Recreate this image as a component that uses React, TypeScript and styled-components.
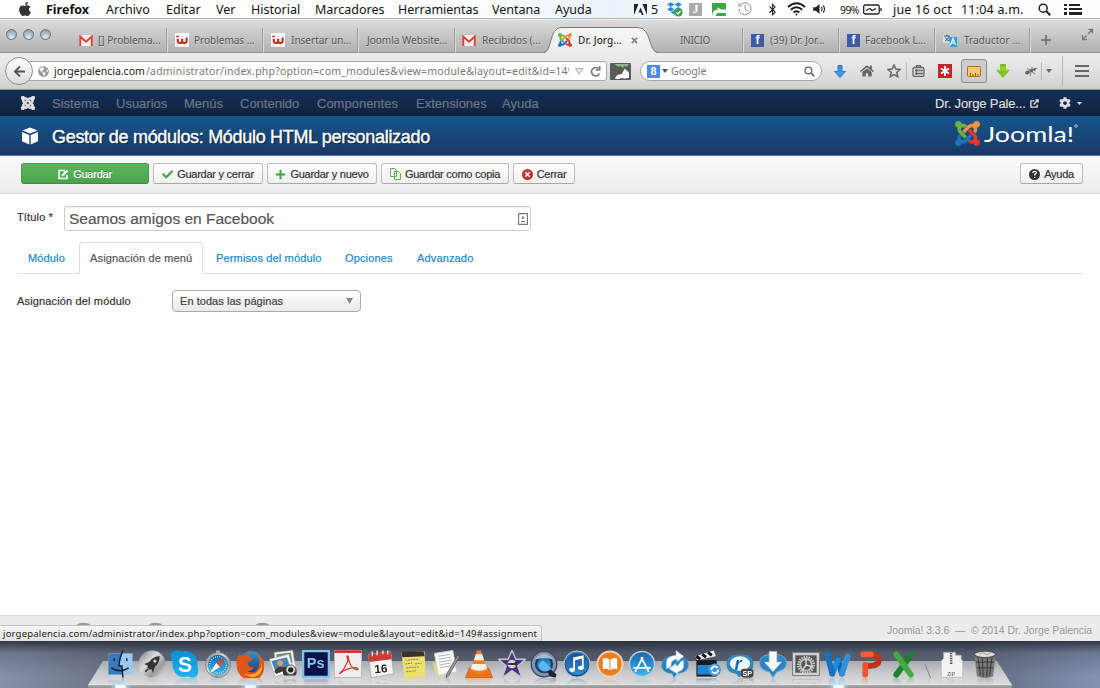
import React from "react";
import styled, { createGlobalStyle } from "styled-components";
import { FaApple, FaBluetoothB, FaDropbox, FaCheck, FaPlus, FaHome, FaCog, FaArrowLeft, FaGlobeAmericas } from "react-icons/fa";

const LUCIDA = `"Noto Sans", "Open Sans", sans-serif`;
const HELV = `"Liberation Sans", Arial, sans-serif`;

const GlobalStyle = createGlobalStyle`
  * { box-sizing: border-box; }
  html, body { margin: 0; padding: 0; }
  body { width: 1100px; height: 688px; overflow: hidden; background: #fff; }
  svg { display: block; flex: none; }
`;

const Screen = styled.div`
  width: 1100px;
  height: 688px;
  display: flex;
  flex-direction: column;
  overflow: hidden;
  font-family: ${HELV};
`;

const Slot = styled.span<{ $w: number; $ml?: number; $ls?: number; $color?: string }>`
  flex: none;
  display: flex;
  align-items: center;
  width: ${(p) => p.$w}px;
  margin-left: ${(p) => p.$ml || 0}px;
  letter-spacing: ${(p) => p.$ls || 0}px;
  color: ${(p) => p.$color || "inherit"};
  white-space: nowrap;
`;

/* ---------- system menu bar ---------- */
const MenuBar = styled.header`
  height: 19px;
  flex: none;
  display: flex;
  align-items: center;
  background: linear-gradient(90deg, #fff 0%, #fff 42%, #e9f3fa 56%, #fff 64%, #fdfdfd 100%);
  border-bottom: 1px solid #b4b4b4;
  font-family: ${LUCIDA};
  font-size: 12.5px;
  line-height: 18px;
  color: #111;
`;
const MenuItem = styled(Slot)<{ $bold?: boolean; $small?: boolean }>`
  padding-top: 1px;
  font-size: ${(p) => (p.$small ? 10.4 : 12.5)}px;
  font-weight: ${(p) => (p.$bold ? 700 : 400)};
`;

/* ---------- browser tabs ---------- */
const TabStrip = styled.div`
  height: 34px;
  flex: none;
  display: flex;
  align-items: flex-end;
  background: linear-gradient(#dedede, #c6c6c6 50%, #b0b0b0);
  font-family: ${LUCIDA};
  font-size: 10px;
  color: #555;
  box-shadow: inset 0 1px #eee;
`;
const Lights = styled.div`
  width: 73px;
  height: 34px;
  display: flex;
  gap: 6px;
  padding: 10px 0 0 6px;
  border-bottom: 1px solid #919191;
`;
const Light = styled.i`
  width: 11px;
  height: 11px;
  border-radius: 50%;
  border: 1px solid #667082;
  background: radial-gradient(circle at 50% 80%, #e9eff6 0, #b4bfd0 45%, #8491a8 100%);
`;
const Tab = styled.div<{ $w: number; $pl: number; $gap?: number; $line?: boolean }>`
  width: ${(p) => p.$w}px;
  height: 25px;
  flex: none;
  display: flex;
  align-items: center;
  gap: ${(p) => p.$gap ?? 5}px;
  padding-left: ${(p) => p.$pl}px;
  white-space: nowrap;
  text-shadow: 0 1px rgba(255, 255, 255, 0.4);
  border-right: ${(p) => (p.$line ? "1px solid #dadada" : "0")};
  box-shadow: ${(p) => (p.$line ? "inset -1px 0 #9b9b9b" : "none")};
  border-bottom: 1px solid #919191;
`;
const TabText = styled.span<{ $ls?: number }>`
  letter-spacing: ${(p) => p.$ls || 0}px;
`;
const ActiveTab = styled.div`
  position: relative;
  width: 116px;
  height: 26px;
  margin: 0 -6px 0 -13px;
  flex: none;
  z-index: 1;
`;
const ActiveTabContent = styled.div`
  position: absolute;
  inset: 0;
  display: flex;
  align-items: center;
  padding: 0 0 0 14px;
  gap: 6px;
  color: #333;
  font-weight: 500;
  white-space: nowrap;
`;
const CloseMark = styled.svg`
  margin-left: 3px;
`;
const Expand = styled.span`
  flex: 1;
  height: 34px;
  padding-top: 9px;
  border-bottom: 1px solid #919191;
`;
const Favicon = styled.span<{ $bg: string; $fg?: string; $serif?: boolean }>`
  width: 13px;
  height: 13px;
  flex: none;
  background: ${(p) => p.$bg};
  color: ${(p) => p.$fg || "#fff"};
  display: flex;
  align-items: center;
  justify-content: center;
  font: 700 12px/12px ${(p) => (p.$serif ? `"Liberation Serif", serif` : HELV)};
  text-shadow: none;
`;

/* ---------- browser toolbar ---------- */
const NavBar = styled.div`
  height: 37px;
  flex: none;
  display: flex;
  align-items: center;
  background: linear-gradient(#ededed, #dedede 60%, #cfcfcf);
  border-bottom: 1px solid #8e9096;
  font-family: ${LUCIDA};
  font-size: 10.5px;
  color: #777;
`;
const BackButton = styled.div`
  width: 28px;
  height: 28px;
  flex: none;
  margin-left: 5px;
  border-radius: 50%;
  border: 1px solid #8f8f8f;
  background: linear-gradient(#fdfdfd, #dcdcdc);
  color: #555;
  display: flex;
  align-items: center;
  justify-content: center;
  z-index: 1;
`;
const UrlBox = styled.div`
  width: 580px;
  height: 20px;
  flex: none;
  margin-left: -6px;
  padding-left: 10px;
  border: 1px solid #aaa;
  border-radius: 0 3px 3px 0;
  background: #fff;
  display: flex;
  align-items: center;
`;
const UrlPath = styled(Slot)`
  overflow: hidden;
`;
const SearchBox = styled.div`
  width: 182px;
  height: 20px;
  flex: none;
  margin-left: 9px;
  padding-left: 6px;
  border: 1px solid #a5a5a5;
  border-radius: 10px;
  background: #fff;
  display: flex;
  align-items: center;
`;
const Pressed = styled.div`
  width: 26px;
  height: 24px;
  margin-left: 9px;
  flex: none;
  border: 1px solid #8c8c8c;
  border-radius: 3px;
  background: #cdcdcd;
  display: flex;
  align-items: center;
  justify-content: center;
`;
const VLine = styled.i<{ $h: number; $ml: number }>`
  width: 1px;
  flex: none;
  height: ${(p) => p.$h}px;
  margin-left: ${(p) => p.$ml}px;
  background: #b8b8b8;
`;

/* ---------- administration page ---------- */
const AdminNav = styled.nav`
  height: 26px;
  flex: none;
  display: flex;
  align-items: center;
  background: linear-gradient(#152f58, #10223e);
  color: #6a7689;
  font-size: 13px;
  padding-left: 21px;
  -webkit-text-stroke: 0.2px;
`;
const AdminHeader = styled.div`
  height: 40px;
  flex: none;
  display: flex;
  align-items: center;
  padding-left: 21px;
  background: linear-gradient(#17568c, #1a3867);
  border-bottom: 1px solid #5570a0;
  color: #fff;
`;
const Title = styled.h1`
  width: 892px;
  margin: 3px 0 0 13px;
  font-size: 18px;
  font-weight: 400;
  line-height: 22px;
  letter-spacing: -0.31px;
  -webkit-text-stroke: 0.4px #fff;
  text-shadow: 1px 1px 1px rgba(0, 0, 0, 0.6);
  white-space: nowrap;
`;
const Brand = styled.div`
  display: flex;
  align-items: center;
  gap: 3px;
  margin: -4px 0 0 11px;
`;
const ActionBar = styled.div`
  height: 38px;
  flex: none;
  display: flex;
  align-items: flex-start;
  padding: 7px 0 0 21px;
  gap: 4px;
  background: linear-gradient(#fbfbfb, #ececec);
  border-bottom: 1px solid #d9d9d9;
`;
const Button = styled.button<{ $w: number; $primary?: boolean; $ml?: number }>`
  width: ${(p) => p.$w}px;
  height: 21px;
  flex: none;
  margin: 0 0 0 ${(p) => p.$ml || 0}px;
  padding: 1px 0 0;
  display: flex;
  align-items: center;
  justify-content: center;
  gap: 4px;
  border: 1px solid ${(p) => (p.$primary ? "#4a9a4a" : "#bcbcbc")};
  border-bottom-color: ${(p) => (p.$primary ? "#3f873f" : "#a8a8a8")};
  border-radius: 3px;
  background: ${(p) => (p.$primary ? "linear-gradient(#5cb75c, #4ca24c)" : "linear-gradient(#fff, #efefef)")};
  color: ${(p) => (p.$primary ? "#fff" : "#333")};
  text-shadow: ${(p) => (p.$primary ? "0 -1px rgba(0,0,0,.3)" : "none")};
  font: 11px/14px ${HELV};
  letter-spacing: -0.25px;
  -webkit-text-stroke: 0.2px;
  white-space: nowrap;
`;
const Page = styled.main`
  flex: 1;
  display: flex;
  flex-direction: column;
  background: #fff;
  padding: 12px 17px 0;
  color: #333;
  font-size: 11px;
  letter-spacing: 0.15px;
  -webkit-text-stroke: 0.2px;
`;
const FieldRow = styled.div`
  display: flex;
  align-items: flex-start;
`;
const Label = styled.label<{ $w: number; $top: number }>`
  width: ${(p) => p.$w}px;
  padding-top: ${(p) => p.$top}px;
  line-height: 14px;
`;
const TextField = styled.div`
  width: 467px;
  height: 25px;
  padding: 1px 2px 0 4px;
  display: flex;
  align-items: center;
  justify-content: space-between;
  border: 1px solid #ccc;
  border-radius: 3px;
  box-shadow: inset 0 1px 1px rgba(0, 0, 0, 0.07);
  font-size: 15.5px;
  letter-spacing: 0;
  color: #555;
`;
const PageTabs = styled.div`
  display: flex;
  height: 32px;
  margin-top: 11px;
  border-bottom: 1px solid #ddd;
`;
const PageTab = styled.a<{ $w: number; $pl: number; $active?: boolean }>`
  width: ${(p) => p.$w}px;
  height: 32px;
  padding: 8px 0 0 ${(p) => p.$pl}px;
  line-height: 14px;
  white-space: nowrap;
  color: ${(p) => (p.$active ? "#555" : "#1a87c9")};
  border: ${(p) => (p.$active ? "1px solid #ddd" : "1px solid transparent")};
  border-bottom: ${(p) => (p.$active ? "1px solid #fff" : "0")};
  border-radius: 4px 4px 0 0;
`;
const Select = styled.div`
  width: 189px;
  height: 22px;
  margin-top: 16px;
  padding: 0 7px 1px 7px;
  display: flex;
  align-items: center;
  justify-content: space-between;
  border: 1px solid #aaa;
  border-radius: 4px;
  background: linear-gradient(#fff 20%, #f3f3f3 50%, #e9e9e9);
  color: #444;
  letter-spacing: 0.05px;
`;
const StatusBar = styled.footer`
  position: relative;
  height: 26px;
  flex: none;
  display: flex;
  justify-content: flex-end;
  padding: 7px 8px 0 0;
  background: #ececec;
  border-top: 1px solid #dcdcdc;
  font-size: 10.5px;
  line-height: 14px;
  letter-spacing: -0.07px;
  color: #999;
  overflow: hidden;
  white-space: pre;
`;
const Pill = styled.i<{ $x: number }>`
  position: absolute;
  left: ${(p) => p.$x}px;
  top: 7px;
  width: 17px;
  height: 12px;
  border-radius: 8px;
  background: #999;
`;
const LinkPreview = styled.div`
  position: absolute;
  left: 0;
  top: 9px;
  width: 542px;
  height: 17px;
  padding: 1px 0 0 3px;
  border: 1px solid #c0c0c0;
  border-left: 0;
  border-radius: 0 3px 0 0;
  background: linear-gradient(#f6f6f6, #e2e2e2);
  color: #222;
  font: 9.5px/14px ${LUCIDA};
  letter-spacing: 0.195px;
`;

/* ---------- dock ---------- */
const Desktop = styled.div`
  position: relative;
  height: 47px;
  flex: none;
  display: flex;
  padding: 9px 0 0 103.500px;
  background: linear-gradient(rgba(35, 40, 52, 0.85), rgba(55, 62, 78, 0.3) 12px, transparent 34px),
    linear-gradient(90deg, #8590aa, #666e80 12%, #5a6070 50%, #60687a 88%, #8492b4);
  isolation: isolate;
  &::before {
    content: "";
    position: absolute;
    z-index: -1;
    left: 88px;
    top: 20px;
    width: 924px;
    height: 27px;
    clip-path: polygon(15px 0, 909px 0, 924px 24px, 924px 27px, 0 27px, 0 24px);
    background: linear-gradient(#a8aaaf, #c9cacd 45%, #dcdcde 84%, #f4f4f4 86%, #999 92%);
  }
`;
const DockItem = styled.div<{ $w?: number; $running?: boolean }>`
  position: relative;
  width: ${(p) => p.$w || 32.66}px;
  flex: none;
  display: flex;
  justify-content: center;
  align-items: flex-start;
  & > svg { -webkit-box-reflect: below -1px linear-gradient(transparent 70%, rgba(0, 0, 0, 0.3)); }
  &::after {
    content: "";
    display: ${(p) => (p.$running ? "block" : "none")};
    position: absolute;
    bottom: 0;
    left: 11px;
    width: 11px;
    height: 3px;
    border-radius: 4px;
    background: #effbff;
    box-shadow: 0 0 4px 2px #aee2fa;
  }
`;

const joomlaPieces = [
  ["#6cb33f", "M.6 92.1C.6 58.8 27.4 32 60.4 32c30 0 54.5 21.9 59.2 50.2 32.6-7.6 67.1.6 96.5 30l-44.3 44.3c-20.5-20.5-42.6-16.3-55.4-3.5-14.3 14.3-14.3 37.9 0 52.2l99.5 99.5-44 44.3c-87.7-87.2-49.7-49.7-99.8-99.7-26.8-26.5-35-64.8-24.8-98.9C20.4 144.6.6 120.7.6 92.1z"],
  ["#f7913d", "M130.1 208.5l44.3 44.3c10-10 89.7-89.7 99.7-99.8 14.3-14.3 37.6-14.3 51.9 0 12.8 12.8 17 35-3.5 55.4l44 44.3c31.2-31.2 38.5-67.6 28.9-101.2 29.2-4.1 51.9-29.2 51.9-59.5 0-33.2-26.8-60.1-59.8-60.1-30.3 0-55.4 22.5-59.5 51.6-33.8-9.9-71.7-1.5-98.3 25.1-18.3 19.1-71.1 71.5-99.6 99.9z"],
  ["#e53b2c", "M396.4 360.7c8.2-32.7-.9-68.5-26.3-93.9-11.8-12.2 5 4.7-99.5-99.7l-44.3 44.3 99.7 99.7c14.3 14.3 14.3 37.6 0 51.9-12.8 12.8-35 17-55.4-3.5l-44 44.3c27.6 30.2 68 38.8 102.7 28 5.5 27.4 29.7 48.1 58.9 48.1 33 0 59.8-26.8 59.8-60.1 0-30.2-22.5-55-51.6-59.1z"],
  ["#1b75bc", "M312.1 307.6l-44-44.3c-87 86.4-50.4 50.4-99.7 99.8-14.3 14.3-37.6 14.3-51.9 0-13.1-13.4-16.9-35.3 3.2-55.4l-44-44.3c-30.2 30.2-38 65.2-29.5 98.3-26.7 6-46.2 29.9-46.2 58.2C0 453.2 26.8 480 59.8 480c28.6 0 52.5-19.8 58.6-46.7 32.7 8.2 68.5-.6 94.2-26 32.1-32 12.2-12.4 99.5-99.7z"],
];
const JoomlaMark = ({ size, color }: { size: number; color?: string }) => (
  <svg width={size} height={size} viewBox="0 32 448 448">
    {joomlaPieces.map(([c, d]) => (
      <path key={c} d={d} fill={color || c} stroke={color} strokeWidth={color ? 26 : 0} />
    ))}
  </svg>
);

const Gmail = () => (
  <svg width="14" height="11" viewBox="0 0 14 11">
    <rect width="14" height="11" rx="1" fill="#f2efee" />
    <path d="M1.200 11V1.500L7 6.700l5.800-5.200V11" fill="none" stroke="#d5473b" strokeWidth="2" />
  </svg>
);
const WIcon = () => (
  <svg width="14" height="14" viewBox="0 0 14 14">
    <rect width="14" height="14" fill="#f8f5f4" />
    <path d="M1.300 3.500h2.400" stroke="#c5281f" strokeWidth="1.600" />
    <path d="M2.800 5.700v2.300q0 1.900 2.200 1.900T7.200 8V5.700V8q0 1.900 2.200 1.900T11.600 8V4.500" fill="none" stroke="#c5281f" strokeWidth="2" />
  </svg>
);
const Translate = () => (
  <svg width="14" height="14" viewBox="0 0 14 14">
    <path d="M0 1h7l2 9H0z" fill="#d5dde3" />
    <path d="M1 3h6M4 1.500V3M2 8q3.500-2 4-5M2.500 4.500q1 2.500 3.500 3.500" stroke="#46596a" fill="none" />
    <path d="M5 4h9v10H8z" fill="#2d9fe4" />
    <path d="M7.500 12l2.500-6.500 2.500 6.500M8.500 10h3" stroke="#fff" fill="none" strokeWidth="1.200" />
  </svg>
);
const Magnifier = ({ s = 13, c = "#222" }: { s?: number; c?: string }) => (
  <svg width={s} height={s} viewBox="0 0 13 13" fill="none" stroke={c}>
    <circle cx="5.200" cy="5.200" r="4" strokeWidth="1.500" />
    <path d="M8.200 8.200l4 4" strokeWidth="2" />
  </svg>
);
const Flag = ({ w, h, dark }: { w: number; h: number; dark?: boolean }) => (
  <svg width={w} height={h} viewBox="0 0 20 18" preserveAspectRatio="none">
    <rect width="20" height="18" rx="1" fill={dark ? "#595c5a" : "#39a845"} />
    {dark && <path d="M4 1h14l-2 3-2-1-2 2-2-2-2 1z" fill="#8fb68e" />}
    {dark ? <path d="M5 17q0-5 6-5l3-6 4 4v6q-4 1-8 0l-1 1z" fill="#fff" /> : <path d="M0 18q1-9 8-9V6l5 3h7v5H9q-3 0-4 4z" fill="#fff" />}
  </svg>
);

/* Dock artwork, drawn on a 28 by 28 grid */
const art: React.ReactNode[] = [
  <g key="finder">
    <path d="M2 3h25v22H2z" fill="#9cc8ec" /><path d="M2 3h14l-3 13h3l1 9H2z" fill="#3978bb" />
    <path d="M17 0q-4 9-4 16h3l1 12M8 8v3M21 8v3M5 18q9 6 18 0" fill="none" stroke="#10213b" strokeWidth="1.500" />
  </g>,
  <g key="launch">
    <circle cx="14" cy="14" r="14" fill="url(#silver)" />
    <path d="M22 6q-7 0-11 6l-5 2 4 2-1 2 3 2 1-1 2 4 2-6q5-4 5-11z" fill="#333" /><circle cx="17" cy="11" r="1.700" fill="#ccc" /><path d="M7 22l3-3" stroke="#444" strokeWidth="2" />
  </g>,
  <g key="skype">
    <path d="M1 1q5-2 9 0 9-2 14 4 4 6 3 12 2 5-1 10-4 2-9 0-10 2-14-5-3-6-2-11-3-6 0-10z" fill="url(#sky)" />
    <text x="14" y="22" textAnchor="middle" fontFamily={HELV} fontWeight="700" fontSize="22" fill="#fff">S</text>
  </g>,
  <g key="safari">
    <circle cx="14" cy="15" r="13" fill="url(#silver)" stroke="#888" /><path d="M12 0h4v3h-4z" fill="#aaa" /><circle cx="14" cy="15" r="10.500" fill="url(#blue)" /><circle cx="14" cy="15" r="8.500" fill="none" stroke="#d9eefc" strokeWidth="1.500" strokeDasharray=".7 1.600" />
    <path d="M22 7l-6 10-4-4z" fill="#e64832" /><path d="M6 23l6-10 4 4z" fill="#fff" />
  </g>,
  <g key="firefox">
    <circle cx="15" cy="13" r="12.500" fill="url(#deep)" />
    <path d="M3 4q3 2 6 1 3-3 7-3-4 2-3 5 5 1 2 4-5 1-3 4 3 4 7 1-3 6-8 5 8 5 12-4 2-8-2-13 8 4 8 12-1 15-15 15Q0 28 0 14 0 8 3 4z" fill="#e0551c" /><path d="M24 5q5 10-1 16-7 7-16 2 9 8 17 1 5-7 0-19z" fill="#f9b52a" />
  </g>,
  <g key="photos">
    <path d="M5 2L24 0l3 18-20 3z" fill="#f8f5e8" stroke="#bbb" strokeWidth=".5" /><path d="M7 4l15-2 2 11-15 3z" fill="#6a8b79" /><path d="M0 9l20-5 5 17-19 6z" fill="#f7f7f7" stroke="#aaa" strokeWidth=".5" /><path d="M2 11l16-4 4 12-15 5z" fill="#4d82b4" /><circle cx="11" cy="13" r="3" fill="#d69c72" /><path d="M5 22q3-6 8-5l7 2-13 5z" fill="#473a36" /><rect x="14" y="17" width="14" height="9" rx="3" fill="#333" /><circle cx="22" cy="20" r="5" fill="#d9d9d9" stroke="#555" /><circle cx="22" cy="20" r="2.700" fill="#222" />
  </g>,
  <g key="ps">
    <path d="M.700.700h26.600v26.600H.700z" fill="#0c1048" stroke="#82c1eb" strokeWidth="2.400" /><text x="13.700" y="18" textAnchor="middle" fontFamily={HELV} fontSize="15" fontWeight="700" fill="#83c8f2">Ps</text>
  </g>,
  <g key="pdf">
    <path d="M0 0h28v28H0z" fill="#efefef" stroke="#bbb" /><path d="M0 0h28v2.500H0z" fill="#d7241b" /><path d="M5 24q6-5 9-14-2-6 0-4 2 13 9 14 3 0 0-2-8-1-18 6z" fill="none" stroke="#d83125" strokeWidth="1.300" />
  </g>,
  <g key="calendar">
    <path d="M1 4l23-3 3 23-23 4z" fill="#f7f7f7" stroke="#999" strokeWidth=".6" /><path d="M1 4l23-3 1 8L2 12z" fill="#cd3b35" /><path d="M5 1v5M10 0v5M16 0v4M21 0v4" stroke="#ddd" strokeWidth="1.500" /><text x="14" y="23" textAnchor="middle" fontFamily={HELV} fontWeight="700" fontSize="12" fill="#222" transform="rotate(-5 14 20)">16</text>
  </g>,
  <g key="notes">
    <path d="M1 2l24-1 1 26-22 1z" fill="#eee06f" /><path d="M1 1h23l1 5-23 1z" fill="#39332d" /><path d="M5 10l14-1M5 14l7-1M15 14l7-1M6 18l13-1M6 22l10-1" stroke="#88823f" strokeDasharray="2 .8" />
  </g>,
  <g key="textedit">
    <path d="M0 12l4 15 18-4z" fill="#e8d777" /><path d="M2 3l19-3 4 22-19 4z" fill="#fafafa" stroke="#ccc" /><path d="M6 6l12-2M6 9l13-2M7 12l13-2M7 15l12-2M8 18l10-2" stroke="#aaa" strokeWidth=".9" /><path d="M28 6L17 26l-3 2 1-4L26 5z" fill="#999" stroke="#444" strokeWidth=".7" />
  </g>,
  <g key="vlc">
    <path d="M4 18h20l4 10H0z" fill="#ed7419" stroke="#b94e0c" strokeWidth=".6" /><path d="M12 0h4l7 21q-9 5-18 0z" fill="#f58021" /><path d="M10.700 4h6.600l2 6h-10.600zM7.400 14h13.200l1.800 5q-8 4-17 0z" fill="#f5f1eb" />
  </g>,
  <g key="imovie">
    <path d="M14 0l4 9h10l-8 7 4 12-10-7-10 7 4-12-8-7h10z" fill="#46347e" stroke="#c7c3ce" strokeWidth="1.500" /><circle cx="14" cy="14" r="4.500" fill="#d7d7db" /><path d="M10 13h6l3-2v5l-3-1h-6z" fill="#333" />
  </g>,
  <g key="quicktime">
    <circle cx="14" cy="14" r="14" fill="#3a4d68" /><circle cx="14" cy="14" r="11" fill="#1d3d6b" stroke="#8795a8" strokeWidth="3" /><circle cx="14" cy="14" r="7" fill="url(#blue)" /><path d="M13 13l14 12-1 3-6-1z" fill="#162536" /><path d="M9 18q-1-6 4-8l9 9q-8 6-13-1z" fill="#5cb6f2" /><path d="M5 9q9-10 18 0-8-2-18 0z" fill="#d5efff" opacity=".7" />
  </g>,
  <g key="itunes">
    <circle cx="14" cy="14" r="13.500" fill="url(#deep)" stroke="#b7c5d0" /><circle cx="14" cy="14" r="11.500" fill="url(#itblue)" /><path d="M11 20V8l9-2v12M11 9.500l9-2" fill="none" stroke="#fff" strokeWidth="1.800" /><ellipse cx="9" cy="20" rx="3" ry="2.200" fill="#fff" /><ellipse cx="18" cy="18" rx="3" ry="2.200" fill="#fff" />
  </g>,
  <g key="books">
    <circle cx="14" cy="14" r="13" fill="#ef7e1b" stroke="#e8d2bc" strokeWidth="2" /><path d="M14 9q-4-3-8-1v12q4-2 8 1 4-3 8-1V8q-4-2-8 1v11" fill="#fff" stroke="#e77b20" />
  </g>,
  <g key="appstore">
    <circle cx="14" cy="14" r="13" fill="url(#blue)" stroke="#bdcbd5" strokeWidth="1.500" /><path d="M7 22l8-15M13 7l8 15M5 18h18" stroke="#fff" strokeWidth="1.800" />
  </g>,
  <g key="sync">
    <path d="M0 15Q1 6 13 6q15 0 15 9 0 8-12 9l-3 4-2-4Q0 23 0 15z" fill="#2580bd" stroke="#6aa7cf" strokeWidth=".6" />
    <path d="M5 19V12q0-6 10-7V0l8 6-7 6V9q-6 1-6 5v3zM23 10v7q-1 4-6 5v3l-9-6 7-6v3q4-1 4-4z" fill="#fff" stroke="#8ab4d0" strokeWidth=".6" />
  </g>,
  <g key="clapper">
    <path d="M1 6L20 0l2 6L3 10z" fill="#eee" /><path d="M2 6l4 3M8 4l4 3M14 2l4 3" stroke="#111" strokeWidth="3" /><path d="M2 10h21v17H2z" fill="#151b24" /><path d="M3 15h18v10H3z" fill="#2583cf" /><circle cx="21" cy="20" r="6.500" fill="#4a9bd8" /><path d="M17 20q3-6 7-2M25 20q-3 6-7 2" fill="none" stroke="#fff" strokeWidth="1.800" />
  </g>,
  <g key="rsp">
    <path d="M0 14Q0 4 14 4t14 10q0 9-11 10l-4 4-3-4Q0 23 0 14z" fill="#3186bb" /><ellipse cx="14" cy="13.500" rx="10.500" ry="7.500" fill="#eef5fa" /><text x="12" y="20" textAnchor="middle" fontFamily={HELV} fontWeight="700" fontStyle="italic" fontSize="19" fill="#176fb2">r</text><rect x="15" y="19" width="13" height="9" rx="3" fill="#444" /><text x="21.500" y="26" textAnchor="middle" fontFamily={HELV} fontWeight="700" fontSize="7.500" fill="#fff">SP</text>
  </g>,
  <g key="download">
    <path d="M0 13q0-9 14-9t14 9q0 7-10 9l-4 6-4-6Q0 20 0 13z" fill="#2d84c5" stroke="#75abd1" /><path d="M10 1h8v11h5l-9 10-9-10h5z" fill="#f7f9fa" stroke="#a9bac6" strokeWidth=".6" />
  </g>,
  <g key="settings">
    <path d="M0 2h28v24H0z" fill="#d1d3d3" stroke="#777" /><path d="M3 5h22v18H3z" fill="#555" /><circle cx="14" cy="15" r="8" fill="none" stroke="#ccc" strokeWidth="2.500" strokeDasharray="1.500 1" /><circle cx="14" cy="15" r="6" fill="none" stroke="#bbb" strokeWidth="2" /><path d="M14 15l-4 6M14 15l7 2M14 15V8" stroke="#ddd" strokeWidth="1.500" />
  </g>,
  <g key="word" fill="none" strokeWidth="6" strokeLinecap="round" strokeLinejoin="round">
    <path d="M14 9l4 15" stroke="#1163af" /><path d="M8 24l6-14" stroke="#1d87dc" /><path d="M3 4l5 20" stroke="#1472c1" /><path d="M18 24l6-18" stroke="#2f91dd" />
  </g>,
  <g key="powerpoint" fill="none" strokeWidth="6" strokeLinecap="round" strokeLinejoin="round">
    <path d="M6 4h8q8 1 8 6t-8 6H9" stroke="#bd3418" /><path d="M6 4h8" stroke="#f05f32" /><path d="M8 15v10" stroke="#f0562d" />
  </g>,
  <g key="excel" strokeWidth="6" strokeLinecap="round">
    <path d="M22 4L6 25" stroke="#207e33" /><path d="M6 4l15 21" stroke="#45aa43" />
  </g>,
];

const DockIcon = ({ children, w = 28 }: { children: React.ReactNode; w?: number }) => (
  <svg width={w} height="28" viewBox="-.5 -.5 29 29" preserveAspectRatio="none">{children}</svg>
);
const DockDefs = () => (
  <svg width="0" height="0">
    <defs>
      <linearGradient id="silver" x2="1" y2="1"><stop stopColor="#777" /><stop offset=".4" stopColor="#ddd" /><stop offset=".7" stopColor="#999" /><stop offset="1" stopColor="#eee" /></linearGradient>
      <linearGradient id="sky" x2="0" y2="1"><stop stopColor="#078ed5" /><stop offset="1" stopColor="#21b4ed" /></linearGradient>
      <linearGradient id="blue" x2="0" y2="1"><stop stopColor="#1866a5" /><stop offset="1" stopColor="#38b9f2" /></linearGradient>
      <linearGradient id="itblue" x2="0" y2="1"><stop stopColor="#1b4f8c" /><stop offset="1" stopColor="#2f8fd8" /></linearGradient>
      <linearGradient id="deep" x2="0" y2="1"><stop stopColor="#3c8fc3" /><stop offset="1" stopColor="#103a78" /></linearGradient>
    </defs>
  </svg>
);

const ExternalIcon = ({ s = 9, c = "#ddd" }: { s?: number; c?: string }) => (
  <svg width={s} height={s} viewBox="0 0 10 10" fill="none" stroke={c} strokeWidth="1.500">
    <path d="M5 2H1v7h7V6M4 6l5-5M6 1h3v3" />
  </svg>
);
const EditIcon = () => (
  <svg width="11" height="11" viewBox="0 0 11 11" fill="none" stroke="#fff" strokeWidth="1.500">
    <path d="M7 1.500H1v8h8V6" /><path d="M4 7l5.500-5.500" strokeWidth="2.400" />
  </svg>
);

const menus: [string, number][] = [["Archivo", 44], ["Editar", 34], ["Ver", 19], ["Historial", 48], ["Marcadores", 67], ["Herramientas", 78], ["Ventana", 47], ["Ayuda", 36]];
const adminMenus: [string, number][] = [["Sistema", 47], ["Usuarios", 51], ["Menús", 39], ["Contenido", 60], ["Componentes", 82], ["Extensiones", 69], ["Ayuda", 37]];

export default function App() {
  return (
    <Screen>
      <GlobalStyle />
      <MenuBar>
        <Slot $w={14} $ml={17}><FaApple size={16} color="#333" /></Slot>
        <MenuItem $w={44} $ml={15} $bold>Firefox</MenuItem>
        {menus.map(([t, w]) => <MenuItem key={t} $w={w} $ml={16}>{t}</MenuItem>)}
        <Slot $w={13} $ml={43}>
          <svg width="13" height="11" viewBox="0 0 13 11"><path d="M0 0h4.500L0 11zM8.500 0H13v11zM6.500 3.500l3.200 7.500H7.900l-1-2.400H4.600z" fill="#222" /></svg>
        </Slot>
        <MenuItem $w={7} $ml={4}>5</MenuItem>
        <Slot $w={16} $ml={9}>
          <svg width="16" height="16" viewBox="0 0 16 16"><FaDropbox size={15} color="#2e8fd6" /><circle cx="11.500" cy="11.500" r="4" fill="#43a047" /><path d="M9.500 11.500l1.500 1.500 2.500-3" fill="none" stroke="#fff" strokeWidth="1.200" /></svg>
        </Slot>
        <Slot $w={14} $ml={6}><Favicon $bg="#a9a9a9" $serif>J</Favicon></Slot>
        <Slot $w={15} $ml={9}><Flag w={14} h={13} /></Slot>
        <Slot $w={14} $ml={11}>
          <svg width="14" height="14" viewBox="0 0 14 14" fill="none" stroke="#929292"><path d="M2 3.500A6 6 0 1 1 1 7M1 1v3h3M7 3v4l3 2" /></svg>
        </Slot>
        <Slot $w={9} $ml={14}><FaBluetoothB size={13} color="#222" /></Slot>
        <Slot $w={18} $ml={12}>
          <svg width="19" height="14" viewBox="0 0 19 14" fill="none" stroke="#1b1b1b" strokeWidth="1.900"><path d="M1 5q8.500-7.500 17 0M3.800 7.800q5.700-5 11.400 0M6.600 10.500q2.900-2.500 5.800 0" /><circle cx="9.500" cy="12.500" r="1" fill="#222" stroke="none" /></svg>
        </Slot>
        <Slot $w={14} $ml={8}>
          <svg width="13" height="10" viewBox="0 0 14 11"><path d="M0 3.500h3L7 0v11L3 7.500H0z" fill="#222" /><path d="M9 3q1.500 2.500 0 5M11 1.500q3 4 0 8" fill="none" stroke="#222" strokeWidth="1.200" /></svg>
        </Slot>
        <MenuItem $w={20} $ml={13} $ls={-0.55} $small>99%</MenuItem>
        <Slot $w={19} $ml={3}>
          <svg width="19" height="11" viewBox="0 0 19 11" fill="none" stroke="#222" strokeWidth="1.300"><rect x=".7" y="1" width="15.500" height="9" rx="1.500" /><path d="M18 4v3M3 6.500l4-2 2 2 4-2" /></svg>
        </Slot>
        <MenuItem $w={60} $ml={11} $ls={0.2}>jue 16 oct</MenuItem>
        <MenuItem $w={63} $ml={8} $ls={0.2}>11:04 a.m.</MenuItem>
        <Slot $w={13} $ml={14}><Magnifier /></Slot>
        <Slot $w={18} $ml={13}>
          <svg width="18" height="11" viewBox="0 0 18 11"><path d="M0 0h3v2H0zM5 0h11v2H5zM0 4h3v2H0zM5 4h13v2H5zM0 8h3v3H0zM5 8h13v3H5z" fill="#222" /></svg>
        </Slot>
      </MenuBar>

      <TabStrip>
        <Lights><Light /><Light /><Light /></Lights>
        <Tab $w={95} $pl={6} $line><Gmail /><TabText>[] Problema...</TabText></Tab>
        <Tab $w={96} $pl={7} $line><WIcon /><TabText>Problemas ...</TabText></Tab>
        <Tab $w={95} $pl={7} $gap={6} $line><WIcon /><TabText>Insertar un...</TabText></Tab>
        <Tab $w={97} $pl={8} $line><TabText>Joomla Website...</TabText></Tab>
        <Tab $w={101} $pl={6} $gap={6}><Gmail /><TabText>Recibidos (...</TabText></Tab>
        <ActiveTab>
          <svg width="116" height="26" viewBox="0 0 116 26">
            <defs><linearGradient id="tab" x2="0" y2="1"><stop stopColor="#f6f6f6" /><stop offset="1" stopColor="#ededed" /></linearGradient></defs>
            <path d="M0 26C8 25 5 1 17 .500H94C108 1 104 25 114 26z" fill="url(#tab)" />
            <path d="M0 25.500C8 25 5 1 17 .500H94C108 1 104 25 114 25.500" fill="none" stroke="#777" />
          </svg>
          <ActiveTabContent>
            <JoomlaMark size={14} /><TabText $ls={0.1}>Dr. Jorg...</TabText>
            <CloseMark width="7" height="7" viewBox="0 0 8 8"><path d="M1 1l6 6M7 1L1 7" stroke="#888" strokeWidth="2" /></CloseMark>
          </ActiveTabContent>
        </ActiveTab>
        <Tab $w={90} $pl={26} $line><TabText $ls={-0.3}>INICIO</TabText></Tab>
        <Tab $w={96} $pl={7} $gap={6} $line><Favicon $bg="#3f5d9b">f</Favicon><TabText>(39) Dr. Jor...</TabText></Tab>
        <Tab $w={96} $pl={7} $line><Favicon $bg="#3f5d9b">f</Favicon><TabText>Facebook L...</TabText></Tab>
        <Tab $w={95} $pl={7} $gap={7} $line><Translate /><TabText>Traductor ...</TabText></Tab>
        <Tab $w={50} $pl={10}><svg width="10" height="10" viewBox="0 0 10 10"><path d="M0 5h10M5 0v10" stroke="#666" strokeWidth="1.500" /></svg></Tab>
        <Expand>
          <svg width="13" height="14" viewBox="0 0 13 14" fill="none" stroke="#777" strokeWidth="1.300"><path d="M7.500 1.500h4v4M11.500 1.500L7 6M1.500 7v4.500H6M1.500 11.500L5.500 7.500" /></svg>
        </Expand>
      </TabStrip>

      <NavBar>
        <BackButton><FaArrowLeft size={13} /></BackButton>
        <UrlBox>
          <FaGlobeAmericas size={11} color="#999" />
          <Slot $w={92} $ml={5} $color="#222">jorgepalencia.com</Slot>
          <UrlPath $w={423} $ls={0.2}>/administrator/index.php?option=com_modules&amp;view=module&amp;layout=edit&amp;id=149</UrlPath>
          <Slot $w={8} $ml={6}><svg width="8" height="7" viewBox="0 0 8 7"><path d="M.500.500h7L4 6z" fill="#eee" stroke="#aaa" /></svg></Slot>
          <Slot $w={12} $ml={7}><svg width="11" height="11" viewBox="0 0 11 11" fill="none" stroke="#777" strokeWidth="1.600"><path d="M9.500 7.500a4.200 4.200 0 1 1-1-5M9.700 0v4h-4" /></svg></Slot>
        </UrlBox>
        <Slot $w={21} $ml={3}><Flag dark w={21} h={17} /></Slot>
        <SearchBox>
          <Favicon $bg="#438cf0" $serif>8</Favicon>
          <Slot $w={6} $ml={2}><svg width="6" height="4"><path d="M0 0h6L3 4z" fill="#555" /></svg></Slot>
          <Slot $w={133} $ml={3}>Google</Slot>
          <Magnifier s={11} c="#666" />
        </SearchBox>
        <Slot $w={12} $ml={12}><svg width="12" height="13" viewBox="0 0 12 13"><path d="M4 .500h4v6h3.500L6 12.500.500 6.500H4z" fill="#3f98ef" stroke="#1f66b6" strokeWidth=".8" /></svg></Slot>
        <Slot $w={14} $ml={14}><FaHome size={14} color="#666" /></Slot>
        <Slot $w={14} $ml={13}><svg width="14" height="14" viewBox="0 0 14 14"><path d="M7 1l1.800 4 4.200.500-3.200 2.900.900 4.300L7 10.600l-3.700 2.100.900-4.300L1 5.500 5.200 5z" fill="none" stroke="#666" strokeWidth="1.500" /></svg></Slot>
        <VLine $h={18} $ml={5} />
        <Slot $w={13} $ml={5}><svg width="13" height="12" viewBox="0 0 13 12" fill="none" stroke="#666" strokeWidth="1.300"><rect x="1" y="2.500" width="11" height="9" rx="1.500" /><path d="M4.500 2V.700h4V2M3 5.500h8M3 8.500h8M4.500 4v6" /></svg></Slot>
        <Slot $w={14} $ml={13}><svg width="14" height="14" viewBox="0 0 14 14"><rect width="14" height="14" fill="#c22727" /><path d="M7 2v10M3 4.500l8 5M11 4.500l-8 5" stroke="#fff" strokeWidth="2" /></svg></Slot>
        <Pressed><svg width="14" height="11" viewBox="0 0 14 11"><rect x=".5" y=".5" width="13" height="10" rx="1" fill="#fbc573" stroke="#b36a21" /><path d="M3.500 10V7M6 10V8M8.500 10V7M11 10V8" stroke="#9b5c1b" /></svg></Pressed>
        <Slot $w={14} $ml={9}><svg width="14" height="14" viewBox="0 0 14 14"><path d="M4 0h6v6h4l-7 8-7-8h4z" fill="#84c11b" /><path d="M1 6h12M4 4h6" stroke="#a6d84a" /></svg></Slot>
        <Slot $w={13} $ml={14}><svg width="13" height="12" viewBox="0 0 13 12"><g stroke="#555" fill="#666"><ellipse cx="3.500" cy="7.500" rx="2.500" ry="1.800" stroke="none" transform="rotate(-25 3.500 7.500)" /><circle cx="7.500" cy="5.500" r="1.800" stroke="none" /><circle cx="10.500" cy="4.500" r="1.400" stroke="none" /><path d="M7 6L3 3M8 5l0-3M8 7l3 2M7 7l-1 4M11 4l2-1" strokeWidth=".7" /></g></svg></Slot>
        <VLine $h={18} $ml={4} />
        <Slot $w={6} $ml={4}><svg width="6" height="4"><path d="M0 0h6L3 4z" fill="#666" /></svg></Slot>
        <VLine $h={30} $ml={10} />
        <Slot $w={14} $ml={12}><svg width="14" height="12"><path d="M0 1h14M0 6h14M0 11h14" stroke="#666" strokeWidth="2" /></svg></Slot>
      </NavBar>

      <AdminNav>
        <JoomlaMark size={14} color="#e4e4e4" />
        {adminMenus.map(([t, w]) => <Slot key={t} $w={w} $ml={17}>{t}</Slot>)}
        <Slot $w={91} $ml={396} $ls={-0.15} $color="#ddd">Dr. Jorge Pale...</Slot>
        <Slot $w={9} $ml={4}><ExternalIcon /></Slot>
        <Slot $w={12} $ml={20}><FaCog size={12} color="#ddd" /></Slot>
        <Slot $w={5} $ml={6}><svg width="5" height="3"><path d="M0 0h5L2.500 3z" fill="#ddd" /></svg></Slot>
      </AdminNav>
      <AdminHeader>
        <svg width="18" height="18" viewBox="0 0 18 18" fill="#fff"><path d="M9 .500l7.500 3L9 6.500l-7.500-3zM1 5l7.300 3v9.500L1 14.300zM17 5L9.700 8v9.500l7.300-3.200z" /></svg>
        <Title>Gestor de módulos: Módulo HTML personalizado</Title>
        <Brand>
          <JoomlaMark size={25} />
          <svg width="102" height="30" viewBox="0 0 102 30">
            <text x="1" y="23" textLength="90" lengthAdjust="spacingAndGlyphs" fontFamily="Lato, sans-serif" fontSize="22" fill="#fff">Joomla!</text>
            <circle cx="93" cy="7" r="1.300" fill="none" stroke="#fff" strokeWidth=".6" />
          </svg>
        </Brand>
      </AdminHeader>
      <ActionBar>
        <Button $w={128} $primary><EditIcon />Guardar</Button>
        <Button $w={110}><FaCheck size={11} color="#46a546" />Guardar y cerrar</Button>
        <Button $w={110}><FaPlus size={11} color="#46a546" />Guardar y nuevo</Button>
        <Button $w={128}>
          <svg width="11" height="12" viewBox="0 0 11 12" fill="#fff" stroke="#5caf55"><path d="M.500.500h4l2 2v6h-6zM4.500 3.500h4l2 2v6h-6z" /></svg>Guardar como copia
        </Button>
        <Button $w={62}>
          <svg width="11" height="11" viewBox="0 0 11 11"><circle cx="5.500" cy="5.500" r="5.500" fill="#bd362f" /><path d="M3.300 3.300l4.400 4.400M7.700 3.300L3.300 7.700" stroke="#fff" strokeWidth="1.500" /></svg>Cerrar
        </Button>
        <Button $w={63} $ml={441}>
          <svg width="11" height="11" viewBox="0 0 11 11"><circle cx="5.500" cy="5.500" r="5.500" fill="#333" /><path d="M3.700 4q.2-1.700 2-1.600 1.800.1 1.700 1.500-.2 1-1.700 1.500v1M5.700 7.700v1.200" fill="none" stroke="#fff" strokeWidth="1.200" /></svg>Ayuda
        </Button>
      </ActionBar>
      <Page>
        <FieldRow>
          <Label $w={47} $top={4}>Título *</Label>
          <TextField>Seamos amigos en Facebook
            <svg width="10" height="12" viewBox="0 0 10 12" fill="none" stroke="#777"><rect x=".5" y=".5" width="9" height="11" rx="1" strokeWidth="1.300" /><path d="M5 3v3M3.500 5h3M3 8.500h4" /></svg>
          </TextField>
        </FieldRow>
        <PageTabs>
          <PageTab $w={62} $pl={10}>Módulo</PageTab>
          <PageTab $w={124} $pl={10} $active>Asignación de menú</PageTab>
          <PageTab $w={130} $pl={12}>Permisos del módulo</PageTab>
          <PageTab $w={72} $pl={11}>Opciones</PageTab>
          <PageTab $w={90} $pl={11}>Advanzado</PageTab>
        </PageTabs>
        <FieldRow>
          <Label $w={155} $top={20}>Asignación del módulo</Label>
          <Select>En todas las páginas<svg width="7" height="6"><path d="M0 0h7L3.500 6z" fill="#888" /></svg></Select>
        </FieldRow>
      </Page>
      <StatusBar>
        <Pill $x={75} /><Pill $x={147} /><Pill $x={254} />
        <LinkPreview>jorgepalencia.com/administrator/index.php?option=com_modules&amp;view=module&amp;layout=edit&amp;id=149#assignment</LinkPreview>
        <span>Joomla! 3.3.6  —  © 2014 Dr. Jorge Palencia</span>
      </StatusBar>
      <Desktop>
        <DockDefs />
        {art.map((a, i) => <DockItem key={i} $running={i === 0 || i === 4 || i === 22}><DockIcon>{a}</DockIcon></DockItem>)}
        <DockItem $w={16}><svg width="10" height="28"><path d="M2 14l6 15" stroke="#888" /></svg></DockItem>
        <DockItem><DockIcon w={24}><path d="M4 2h14v3h7v4l2 2v17H1V11l3-3z" fill="#f2f2f2" stroke="#bbb" /><path d="M13 0v14" stroke="#555" strokeWidth="3" strokeDasharray="1.500 1" /><text x="13" y="26" textAnchor="middle" fontFamily={HELV} fontSize="6" fill="#555">ZIP</text></DockIcon></DockItem>
        <DockItem><DockIcon w={26}><path d="M2 3h24l-3 24q-9 3-18 0z" fill="#77797b" /><path d="M6 6l3 20M11 6l1 21M17 6l-1 21M22 6l-3 20M4 12h20M5 18h18" stroke="#333" /><ellipse cx="14" cy="4" rx="12" ry="3.500" fill="#ddd" stroke="#555" strokeWidth="1.500" /><path d="M8 4l4-2 4 2 4-1" stroke="#999" fill="none" /></DockIcon></DockItem>
      </Desktop>
    </Screen>
  );
}
